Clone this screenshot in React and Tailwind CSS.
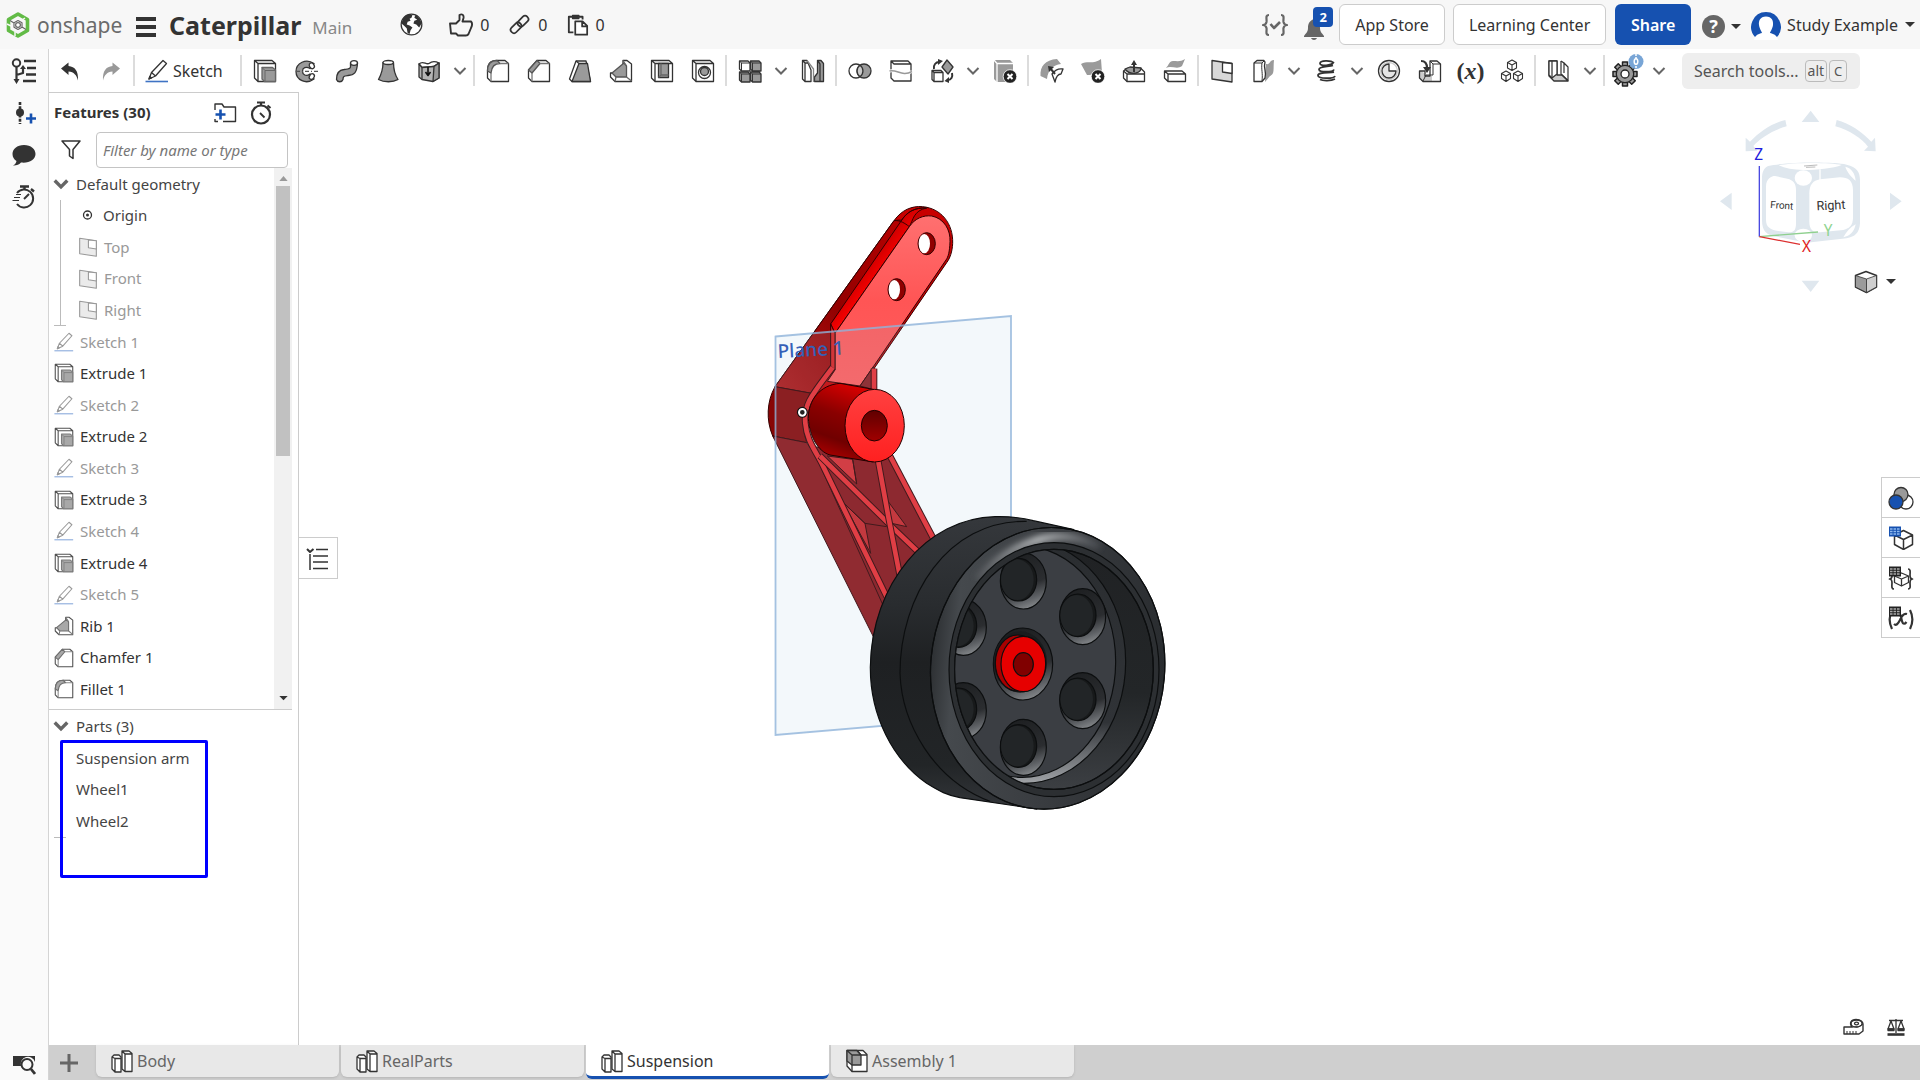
import { useState } from 'react';

const DARK = '#333333';
const GRAY = '#9a9a9a';
const BLUE = '#1651b0';

function Icon({ children, className = 'w-6 h-6', viewBox = '0 0 24 24' }) {
  return (
    <svg
      viewBox={viewBox}
      className={`${className} shrink-0`}
      fill="none"
      stroke={DARK}
      strokeWidth="1.3"
      strokeLinejoin="round"
      aria-hidden="true"
    >
      {children}
    </svg>
  );
}

function Caret({ className = 'w-2.5 h-1.5' }) {
  return (
    <svg viewBox="0 0 10 6" className={`${className} shrink-0`} aria-hidden="true">
      <path d="M0 0H10L5 5Z" fill={DARK} />
    </svg>
  );
}

function Chevron({ className = 'w-3.5 h-2.5', width = 2.4 }) {
  return (
    <svg viewBox="0 0 14 10" className={`${className} shrink-0`} aria-hidden="true">
      <path d="M1.5 2L7 7.5L12.5 2" fill="none" stroke="#666" strokeWidth={width} />
    </svg>
  );
}

/* feature drawings, shared by the toolbar and the feature list */

const drawings = {
  undo: (
    <path d="M3 9.5L10.5 3.5V7C17 7.5 20.5 12 20 21.5C18.5 16 16 13 10.5 12.5V16Z" fill={DARK} stroke="none" />
  ),
  redo: (
    <path d="M21 9.5L13.5 3.5V7C7 7.5 3.5 12 4 21.5C5.5 16 8 13 13.5 12.5V16Z" fill="#999" stroke="none" />
  ),
  sketch: (
    <>
      <path d="M4 20L6.5 13.5L18 1.5L21.5 4.5L10.5 17Z M6.5 13.5L10.5 17" />
      <path d="M4 20L4.8 17.5L6.5 19Z" fill={DARK} />
      <path d="M0.5 22.5H23" stroke="#3f73c4" strokeWidth="1.6" />
    </>
  ),
  extrude: (
    <>
      <path d="M1.5 1.5H19L22.5 4.5V22.5H5L1.5 19Z M1.5 1.5L5 4.5V22.5 M5 4.5H22.5" />
      <path d="M9 8.5H19.5L22.5 11V22.5H11.5L9 20Z" fill={GRAY} stroke="#666" />
      <path d="M9 8.5L12 11.5V22.5M12 11.5H22.5" stroke="#666" strokeWidth="1" />
    </>
  ),
  revolve: (
    <>
      <path d="M20 4.5C12 -1 2 4 2 12.5C2 21 12 26 20 20L16 15C12 18 8.5 15.5 8.5 12.2C8.5 9 12 7 16 9.5Z" fill={GRAY} />
      <ellipse cx="17.8" cy="6.8" rx="2.3" ry="3" transform="rotate(-35 17.8 6.8)" fill="#fff" />
      <ellipse cx="17.8" cy="17.6" rx="2.3" ry="3" transform="rotate(35 17.8 17.6)" fill="#fff" />
      <path d="M2 12.3H24" stroke="#555" strokeDasharray="4 2 1 2" />
    </>
  ),
  sweep: (
    <>
      <path d="M15.5 4V8C15.5 10 13 10 9 10.5C4 11 1.5 14 1.5 20.5C2.5 23.5 7 23.5 8 20.5C8 17 9 17 13 16.5C19 16 22 14 22.5 4Z" fill={GRAY} />
      <ellipse cx="19" cy="4" rx="3.5" ry="2.3" fill="#fff" />
    </>
  ),
  loft: (
    <>
      <path d="M7 3.5C7 12 5 16 2.5 20.5C8 23.5 17 23.5 22 20.5C19 16 17.5 12 17.5 3.5Z" fill={GRAY} />
      <ellipse cx="12.2" cy="3.5" rx="5.2" ry="2" fill="#fff" />
    </>
  ),
  thicken: (
    <>
      <path d="M2 5C6 1 9 6 12 4.5C15 2 18 2 22 4L17 7.5L5 8.5Z" fill="#fff" />
      <path d="M2 5L5 8.5L17 7.5L22 4V19L16 22.5L5 20.5L2 18Z" fill="#b4b4b4" />
      <path d="M17 7.5L22 4V19L16 22.5Z" fill={GRAY} />
      <path d="M5 8.5V20.5" />
      <path d="M11 8V16M8.5 13L11 16.5L13.5 13" stroke="#111" strokeWidth="1.6" />
    </>
  ),
  fillet: (
    <>
      <path d="M1.5 12C1.5 5 5 1.5 11 1.5H19L22.5 4.5V22.5H5L1.5 19Z" />
      <path d="M1.5 12C1.5 5 5 1.5 11 1.5L14 4.5C9 4.5 5.5 8 5 14Z" fill={GRAY} stroke="#555" />
      <path d="M14 4.5H22.5M5 14V22.5" stroke="#777" />
    </>
  ),
  chamfer: (
    <>
      <path d="M1.5 11L10 1.5H19L22.5 4.5V22.5H5L1.5 19Z" />
      <path d="M1.5 11L10 1.5L13 4.5L5 14Z" fill={GRAY} stroke="#555" />
      <path d="M13 4.5H22.5M5 14V22.5" stroke="#777" />
    </>
  ),
  draft: (
    <>
      <path d="M8 2H18L22.5 22.5H4L1.5 20Z" fill="#fff" />
      <path d="M11 4.5H19.5L22.5 22.5H4Z" fill={GRAY} />
      <path d="M8 2L11 4.5" />
    </>
  ),
  rib: (
    <>
      <path d="M14 1.5H18L22.5 5V22.5H6L1.5 18V14H5L14 6Z" />
      <path d="M3 14L15 4L17.5 7V18H7Z" fill={GRAY} stroke="#555" />
      <path d="M17.5 18L22.5 22M17.5 7L14 1.5M7 18L6 22.5" stroke="#666" />
    </>
  ),
  shell: (
    <>
      <path d="M1.5 1.5H19L22.5 4.5V22.5H5L1.5 19Z M1.5 1.5L5 4.5V22.5M5 4.5H22.5" />
      <path d="M8.5 4.5H18.5V18.5H8.5Z" fill={GRAY} />
      <path d="M8.5 18.5L11 16V4.5M11 16H18.5" stroke="#666" />
    </>
  ),
  hole: (
    <>
      <path d="M1.5 1.5H19L22.5 4.5V22.5H5L1.5 19Z M1.5 1.5L5 4.5V22.5M5 4.5H22.5" />
      <circle cx="13.5" cy="13.5" r="6" />
      <circle cx="13.5" cy="12.5" r="4" fill={GRAY} />
    </>
  ),
  pattern: (
    <>
      <path d="M12.5 2H21L23 4V12H14.5L12.5 10Z M1.5 13H10L12 15V23H3.5L1.5 21Z M12.5 13H21L23 15V23H14.5L12.5 21Z" fill={GRAY} />
      <path d="M1.5 2H10L12 4V12H3.5L1.5 10Z" fill="#fff" />
      <path d="M1.5 2L3.5 4H12M3.5 4V12M12.5 2L14.5 4H23M14.5 4V12M1.5 13L3.5 15H12M3.5 15V23M12.5 13L14.5 15H23M14.5 15V23" strokeWidth="1" />
    </>
  ),
  mirror: (
    <>
      <path d="M1.5 1.5H6L10 11V22.5H4L1.5 20Z M4 4V22.5M1.5 1.5L4 4H7" />
      <path d="M22.5 4.5L20 1.5H16.5V14L13.5 18V22.5H22.5Z" fill={GRAY} />
      <path d="M16.5 1.5L19 5V22.5" />
      <path d="M6 1.5L12.5 10V23" stroke="#888" />
    </>
  ),
  boolean: (
    <>
      <circle cx="8" cy="12" r="7" fill="#fff" />
      <circle cx="16" cy="12" r="7" fill={GRAY} />
      <path d="M12 6.3A7 7 0 0 1 12 17.7A7 7 0 0 1 12 6.3Z" fill="#ccc" />
    </>
  ),
  split: (
    <>
      <path d="M2 2H19L22 5V22H5L2 19Z M2 2L5 5H22" />
      <path d="M0.500 12C8 10 13 18 23 12.5" stroke="#fff" strokeWidth="3" />
      <path d="M0.5 12C8 10 13 18 23 12.5" stroke="#999" strokeWidth="1.6" />
    </>
  ),
  transform: (
    <>
      <path d="M2 11.5H11L13 13.5V22.5H4L2 20.5Z M2 11.5L4 13.5H13M4 13.5V22.5" />
      <path d="M17 1L23 8L18 15L12 8Z" fill={GRAY} />
      <path d="M4 10C3 6 6 3 9 3" strokeWidth="2" />
      <path d="M8 0L13 2L8 6Z" fill={DARK} stroke="none" />
      <path d="M22 14C23 18 21 21 18 21" strokeWidth="2" />
      <path d="M19 18V24L14.5 22Z" fill={DARK} stroke="none" />
    </>
  ),
  deletePart: (
    <>
      <path d="M1 1H17L20 4V23H4L1 20Z" fill={GRAY} stroke="none" />
      <path d="M1 1L4 4.5H20M4 4.5V23" stroke="#fff" />
      <circle cx="17" cy="17.5" r="6.800" fill="#222" stroke="#fff" strokeWidth="0.8" />
      <path d="M14.5 15L19.5 20M19.5 15L14.5 20" stroke="#fff" strokeWidth="2" />
    </>
  ),
  replaceFace: (
    <>
      <path d="M0.500 17C0 7 5 1 17 0L21 5C13 6 8 11 7 20Z" fill={GRAY} stroke="none" />
      <path d="M12 15C15 11 18 9 23 10L21 15C18 15 16 18 15 23Z" fill="#fff" />
      <path d="M15 15L10 9" strokeWidth="2" />
      <path d="M8 7L14 8L9 13Z" fill={DARK} stroke="none" />
    </>
  ),
  deleteFace: (
    <>
      <path d="M0 5C7 1 12 6 20 0L21 14C14 11 11 17 6 16Z" fill={GRAY} stroke="none" />
      <circle cx="17" cy="17.5" r="6.8" fill="#222" stroke="#fff" strokeWidth="0.8" />
      <path d="M14.5 15L19.5 20M19.5 15L14.5 20" stroke="#fff" strokeWidth="2" />
    </>
  ),
  moveFace: (
    <>
      <path d="M1.5 12L5 9.5H19L22.5 13V22.5H5L1.5 19Z" fill="#fff" />
      <path d="M3 10C6 14 9 15 14 14C18 13 19 11 19 9L8 8Z" fill={GRAY} />
      <path d="M1.5 12L5 15H22.5M5 15V22.5" />
      <path d="M12 13V3" strokeWidth="2" />
      <path d="M9 6L12 1L15 6Z" fill={DARK} stroke="none" />
    </>
  ),
  offsetFace: (
    <>
      <path d="M3 9C6 6 6 2 10 2C14 2 18 3 22 0L19 7C14 11 8 6 3 9Z" fill={GRAY} stroke="none" />
      <path d="M1.5 12H19L22.5 15V22.5H5L1.5 19Z M1.5 12L5 15H22.5M5 15V22.5" />
    </>
  ),
  plane: (
    <>
      <path d="M2 1.5L22 4.5V23L2 20Z" fill="#d8d8d8" />
      <path d="M12.5 3.500L22 4.500V14.5L12.5 13Z" fill="#fff" />
    </>
  ),
  splitPlane: (
    <>
      <path d="M15 5C20 6 18 1 23 1C22 10 24 15 19 17L14 23Z" fill={GRAY} stroke="none" />
      <path d="M3 4L6 1.5H13L14 3C12 10 16 12 14 19L11 22.5H3Z" fill="#fff" />
      <path d="M3 4H11L13 2M11 4C10 10 12 14 11 22" strokeWidth="1" />
    </>
  ),
  helix: (
    <g strokeWidth="1.8">
      <path d="M20 4C17 1 6 1 6 4.5C6 8 18 6 19 4M19 6.5C15 8 5 7 5 10.5C5 14 19 13 20 10.5M20 13C15 14 4 13 4 16.5C4 20 20 20 21 17M21 20C17 22 9 22 6 20.5" />
    </g>
  ),
  curve: (
    <>
      <circle cx="12" cy="12" r="10.5" />
      <circle cx="12" cy="12" r="8.5" stroke="#ccc" />
      <path d="M12 12H19A7 7 0 1 1 12 5Z" fill="#e4e4e4" />
    </>
  ),
  derive: (
    <>
      <path d="M4 12L7 15V22.5L1.5 19V12Z M14 17V22.5H5L2 19L7 17Z" fill="#ccc" stroke="none" />
      <path d="M12 2H19L22.5 5V22.5H5L1.5 19V12H7V17H12Z" />
      <path d="M12 2L15 5H22M15 5V16H8L5 22" strokeWidth="1" />
      <path d="M3 2C8 2 9 6 9 9" strokeWidth="2.2" />
      <path d="M5 8H13L9 14Z" fill={DARK} stroke="none" />
    </>
  ),
  cubes: (
    <g strokeWidth="1.1">
      <path d="M12 1L16.500 3.5V9L12 11.5L7.5 9V3.5Z M7.5 3.5L12 6L16.5 3.5M12 6V11.5" />
      <path d="M6 12L10.5 14.5V19.5L6 22.5L1.5 19.5V14.5Z M1.5 14.5L6 17L10.5 14.5M6 17V22.5" />
      <path d="M18 12L22.5 14.5V19.5L18 22.5L13.5 19.5V14.5Z M13.5 14.5L18 17L22.5 14.5M18 17V22.5" />
    </g>
  ),
  frame: (
    <>
      <path d="M2 2V17L7 22H21L15 16H10V2Z" fill="#ccc" />
      <path d="M2 2H10V15L5 19L2 16Z" fill="#fff" />
      <path d="M5 2V18M14 2V15L21 21.500V8L17 4V14" strokeWidth="1.2" />
      <path d="M14 2L17 4" />
    </>
  ),
};

function ToolIcon({ name }) {
  return <Icon>{drawings[name]}</Icon>;
}

function Tool({ name, label, children }) {
  return (
    <button type="button" aria-label={label || name} className="w-[41px] h-full flex items-center justify-center shrink-0">
      {children || <ToolIcon name={name} />}
    </button>
  );
}

function ToolChevron() {
  return (
    <button type="button" aria-label="More tools" className="w-[22px] h-full flex items-center justify-center shrink-0">
      <Chevron width={2} />
    </button>
  );
}

function Separator() {
  return <span className="w-0.5 h-[31px] mx-0.5 bg-[#dcdcdc] shrink-0" />;
}

function Header() {
  return (
    <header className="h-[49px] bg-[#f7f7f7] flex items-center shrink-0 pr-[5px] text-[16px]">
      <a href="#home" className="flex items-center w-[136px] pl-1.5 text-[#6b6b6b] text-[21px] leading-6">
        <Icon className="w-6 h-[26px] mr-[7px]" viewBox="0 0 24 26">
          <path d="M12 2L21.5 7.5V18.5L12 24L2.5 18.5V7.5Z" stroke="#62bb46" strokeWidth="3.6" />
          <path d="M12 6.5L17.5 9.7V16.3L12 19.5L6.5 16.3V9.7Z" fill="#fff" stroke="#f7f7f7" strokeWidth="1.5" />
          <path d="M12 8.5L16 10.8V15.2L12 17.5L8 15.2V10.8Z M8 11L4 8.5M16 15L20 17.5" stroke="#666" strokeWidth="1.2" />
          <circle cx="12" cy="13" r="2.4" stroke="#666" strokeWidth="1.2" />
          <path d="M1 12L5 14M19 6L16 8M9 24L9 20" stroke="#f7f7f7" strokeWidth="1.5" />
        </Icon>
        <span>onshape</span>
      </a>
      <button type="button" aria-label="Document menu" className="flex flex-col gap-1 w-5 mt-1">
        <span className="w-5 h-1 bg-[#333]" />
        <span className="w-5 h-1 bg-[#333]" />
        <span className="w-5 h-1 bg-[#333]" />
      </button>
      <h1 className="ml-[13px] text-[25px] leading-8 font-bold text-[#333]">Caterpillar</h1>
      <span className="ml-[11px] mt-1.5 text-[17px] text-[#888]">Main</span>
      <button type="button" aria-label="Public document" className="ml-12">
        <Icon className="w-[23px] h-[23px]">
          <circle cx="12" cy="12" r="10.8" fill="#fff" />
          <path d="M3 6C6 1 10 1 13 2L12 5L10 6L11 8L8 9L7 12L10 13L13 15L11 18L10 22L8 21L7 16L4 13L1.5 11Z M16 2C19 3 22 7 22.5 11L20 15L17 12L14 11L15 8L18 7L15 5Z" fill={DARK} stroke="none" />
        </Icon>
      </button>
      <button type="button" aria-label="Likes" className="ml-[25px] flex items-center gap-1.5">
        <Icon className="w-[26px] h-6" viewBox="0 0 26 24">
          <path d="M2 10.5H8L11.5 7V2C14 0.5 16 2 15.5 5L14.5 8.5H23C24.5 10 24 13 23 15L20.5 21C20 22 19 22.5 18 22.5H10L8 20.5H3Z" strokeWidth="1.9" />
        </Icon>
        0
      </button>
      <button type="button" aria-label="Links" className="ml-5 flex items-center gap-2">
        <Icon className="w-[21px] h-[21px]">
          <g strokeWidth="2">
            <rect x="1" y="12" width="14" height="7.5" rx="3.5" transform="rotate(-45 8 15.7)" />
            <rect x="9" y="4.5" width="14" height="7.5" rx="3.5" transform="rotate(-45 16 8.2)" />
          </g>
        </Icon>
        0
      </button>
      <button type="button" aria-label="Copies" className="ml-5 flex items-center gap-1.5">
        <Icon className="w-[22px] h-6">
          <path d="M7 20H2V3H6M13 3H17V6" strokeWidth="2" />
          <path d="M6 1.5H13V5H6Z" fill={DARK} />
          <path d="M9 8H17L22 13V22.5H9Z M16.5 8V13.5H22" fill="#fff" strokeWidth="1.9" />
        </Icon>
        0
      </button>

      <div className="ml-auto flex items-center">
        <button type="button" aria-label="Tasks">
          <Icon className="w-[26px] h-6" viewBox="0 0 26 24">
            <g stroke="#666" strokeWidth="2.2">
              <path d="M7 2C3 2 5 6 4.5 9C4 11 3 12 1 12C3 12 4 13 4.5 15C5 18 3 22 7 22" />
              <path d="M19 2C23 2 21 6 21.5 9C22 11 23 12 25 12C23 12 22 13 21.5 15C21 18 23 22 19 22" />
              <path d="M8.5 11L12 15L18 9" strokeWidth="2.6" />
            </g>
          </Icon>
        </button>
        <button type="button" aria-label="Notifications" className="relative ml-[15px] mr-[5px] w-[31px] h-[42px]">
          <svg viewBox="0 0 22 22" className="absolute left-0 top-3.5 w-[22px] h-[22px]" aria-hidden="true">
            <path d="M11 1C6 3 5 6 5 10C5 14 3 15 1 18V19H21V18C19 15 17 14 17 10C17 6 16 3 11 1Z" fill="#666" />
            <path d="M8 20H14C13 22.5 9 22.5 8 20Z" fill="#666" />
          </svg>
          <span className="absolute left-2.5 top-[3px] w-5 h-5 rounded-sm bg-[#1651b0] text-white text-[13px] leading-5 font-bold">2</span>
        </button>
        <button type="button" className="w-[106px] h-[41px] bg-white border border-[#ccc] rounded-md">App Store</button>
        <button type="button" className="ml-2 w-[153px] h-[41px] bg-white border border-[#ccc] rounded-md">Learning Center</button>
        <button type="button" className="ml-[9px] w-[76px] h-[41px] bg-[#1651b0] text-white font-semibold rounded-md">Share</button>
        <button type="button" aria-label="Help" className="ml-[11px] mt-1 flex items-center gap-1.5">
          <span className="w-[23px] h-[23px] rounded-full bg-[#666] text-white text-[18px] leading-[23px] font-bold">?</span>
          <Caret />
        </button>
        <button type="button" className="ml-2.5 flex items-center">
          <svg viewBox="0 0 30 30" className="w-[30px] h-[30px] mt-1 mr-1.5" aria-hidden="true">
            <path d="M15 0A15 15 0 0 1 26 25L4 25A15 15 0 0 1 15 0Z" fill={BLUE} />
            <path d="M15 4.5C21 4.5 22.5 9 22 13C21.5 17 19 20 19 21C22 22 26 22.5 27 28L3 28C4 22.5 8 22 11 21C11 20 8.5 17 8 13C7.5 9 9 4.5 15 4.5Z" fill="#fff" />
          </svg>
          Study Example
          <Caret className="w-2.5 h-1.5 ml-[7px]" />
        </button>
      </div>
    </header>
  );
}

function Toolbar() {
  return (
    <div className="h-[43px] flex items-center shrink-0 overflow-hidden">
      <Tool name="undo" />
      <Tool name="redo" />
      <Separator />
      <button type="button" className="w-[101px] pl-2 flex items-center gap-1 text-[16px] shrink-0">
        <ToolIcon name="sketch" />
        Sketch
      </button>
      <Separator />
      <Tool name="extrude" />
      <Tool name="revolve" />
      <Tool name="sweep" />
      <Tool name="loft" />
      <Tool name="thicken" />
      <ToolChevron />
      <Separator />
      <Tool name="fillet" />
      <Tool name="chamfer" />
      <Tool name="draft" />
      <Tool name="rib" />
      <Tool name="shell" />
      <Tool name="hole" />
      <Separator />
      <Tool name="pattern" />
      <ToolChevron />
      <Tool name="mirror" />
      <Separator />
      <Tool name="boolean" />
      <Tool name="split" />
      <Tool name="transform" />
      <ToolChevron />
      <Tool name="deletePart" />
      <Separator />
      <Tool name="replaceFace" />
      <Tool name="deleteFace" />
      <Tool name="moveFace" />
      <Tool name="offsetFace" />
      <Separator />
      <Tool name="plane" />
      <Tool name="splitPlane" />
      <ToolChevron />
      <Tool name="helix" />
      <ToolChevron />
      <Tool name="curve" />
      <Tool name="derive" />
      <Tool name="variable" label="Variable">
        <span className="font-['Liberation_Serif',serif] font-bold text-[24px] leading-6">
          (<i>x</i>)
        </span>
      </Tool>
      <Tool name="cubes" />
      <Separator />
      <Tool name="frame" />
      <ToolChevron />
      <Separator />
      <Tool name="custom" label="Custom features">
        <Icon className="w-8 h-9" viewBox="0 0 32 36">
          <g transform="translate(13 21)">
            {[0, 45, 90, 135].map((a) => (
              <rect key={a} x="-2.5" y="-12" width="5" height="24" fill={GRAY} stroke="#222" strokeWidth="1.5" transform={`rotate(${a})`} />
            ))}
            <circle r="8.7" fill={GRAY} stroke="#222" strokeWidth="1.3" />
            <circle r="4" fill="#fff" stroke="#222" />
          </g>
          <circle cx="24" cy="8.5" r="7.5" fill="#78a5d6" stroke="none" />
          <path d="M24 1V16" stroke="#fff" strokeWidth="1.5" strokeDasharray="2 1" />
          <ellipse cx="24" cy="8.5" rx="1.800" ry="2.8" stroke="#fff" strokeWidth="1.5" fill="#78a5d6" />
        </Icon>
      </Tool>
      <ToolChevron />
      <button type="button" className="ml-3 w-[178px] h-9 pl-3 bg-[#eeeeee] rounded-md flex items-center text-[16px] text-[#555] shrink-0">
        Search tools...
        <kbd className="ml-1.5 px-0.5 h-[22px] border border-[#bbb] rounded-sm text-[14px] leading-5 font-[inherit]">alt</kbd>
        <kbd className="ml-0.5 w-[18px] h-[22px] border border-[#bbb] rounded-sm text-[13px] leading-5 text-center font-[inherit]">C</kbd>
      </button>
    </div>
  );
}

function LeftRail() {
  return (
    <nav className="w-[49px] bg-[#fafafa] border-r border-[#d4d4d4] flex flex-col items-center shrink-0">
      <button type="button" aria-label="Feature list" className="mt-2">
        <Icon className="w-7 h-7" viewBox="0 0 28 28">
          <circle cx="6.5" cy="6" r="3.7" strokeWidth="2" />
          <path d="M6.5 10V24M6.5 18L13 16V11" strokeWidth="2.2" />
          <path d="M3.5 22H9.5L6.5 27Z M10 12L13 8L16 12Z" fill={DARK} stroke="none" />
          <path d="M14 4H26M17 11H26M16 17.5H26M13 24H26" strokeWidth="2.4" />
        </Icon>
      </button>
      <button type="button" aria-label="Insert version" className="mt-4 ml-0.5">
        <Icon className="w-6 h-6">
          <path d="M7 1V23" strokeWidth="2.6" strokeDasharray="3 1.2" />
          <circle cx="7" cy="11.5" r="4" fill={DARK} stroke="none" />
          <path d="M13 17.5H23M18 12.5V22.5" stroke={BLUE} strokeWidth="2.6" />
        </Icon>
      </button>
      <button type="button" aria-label="Comments" className="mt-[18px]">
        <Icon className="w-6 h-6">
          <path d="M12 2C5 2 0.5 6 0.5 11C0.5 14 2 16.5 4.5 18C4 20 3 21.5 1 22.5C4 22.8 7.5 21.5 9 19.5C17 20.5 23.5 16.5 23.5 11C23.5 6 19 2 12 2Z" fill={DARK} stroke="none" />
        </Icon>
      </button>
      <button type="button" aria-label="Performance" className="mt-[18px]">
        <Icon className="w-6 h-6">
          <path d="M5 8A9 9 0 1 1 5 19" strokeWidth="2" />
          <path d="M8 1.5H17M12.5 2V4.5M19 4L22 6.5" strokeWidth="2.4" />
          <path d="M12 14L17 9" strokeWidth="2" />
          <path d="M4 9.5H9M2 12.5H8M0.5 15.5H7" strokeWidth="1.2" />
        </Icon>
      </button>
      <button type="button" aria-label="Search tabs" className="mt-auto mb-1">
        <Icon className="w-6 h-6">
          <path d="M1 4H23V10A7 7 0 1 0 9 14H1Z" fill={DARK} stroke="none" />
          <circle cx="15" cy="12.5" r="5.5" fill="#fafafa" strokeWidth="2" />
          <path d="M19 17L23 22" strokeWidth="2.8" />
        </Icon>
      </button>
    </nav>
  );
}

const features = [
  ['sketch', 'Sketch 1'],
  ['extrude', 'Extrude 1'],
  ['sketch', 'Sketch 2'],
  ['extrude', 'Extrude 2'],
  ['sketch', 'Sketch 3'],
  ['extrude', 'Extrude 3'],
  ['sketch', 'Sketch 4'],
  ['extrude', 'Extrude 4'],
  ['sketch', 'Sketch 5'],
  ['rib', 'Rib 1'],
  ['chamfer', 'Chamfer 1'],
  ['fillet', 'Fillet 1'],
];

function FeaturePanel() {
  const [filter, setFilter] = useState('');

  return (
    <aside className="w-[250px] border-t border-r border-[#ccc] bg-white flex flex-col shrink-0 text-[15px]">
      <div className="h-[39px] pl-[5px] pr-[25px] flex items-center shrink-0">
        <h2 className="font-bold text-[15px]">Features (30)</h2>
        <button type="button" aria-label="Add folder" className="ml-auto">
          <Icon className="w-6 h-6">
            <path d="M2 9V3H9L11 6H22.5V20.5H10M2 18V20.5H5" strokeWidth="1.4" />
            <path d="M2.500 13.5H12.5M7.5 8.500V18.5" stroke={BLUE} strokeWidth="2.6" />
          </Icon>
        </button>
        <button type="button" aria-label="Regeneration times" className="ml-3">
          <Icon className="w-6 h-6">
            <circle cx="12" cy="13.5" r="9" strokeWidth="2.2" />
            <path d="M8 1.5H16M12 2V5M18.5 4.5L21.5 7" strokeWidth="2.2" />
            <path d="M11 12L15.5 16.5" strokeWidth="1.8" />
          </Icon>
        </button>
      </div>
      <div className="h-9 pl-3 pr-2.5 flex items-center shrink-0">
        <Icon className="w-5 h-5" viewBox="0 0 20 20">
          <path d="M1 1H19L12 9.5V18.5L8.5 16V9.5Z" strokeWidth="1.5" />
        </Icon>
        <input
          type="text"
          aria-label="Filter features"
          placeholder="Filter by name or type"
          value={filter}
          onChange={(e) => setFilter(e.target.value)}
          className="ml-[15px] w-full min-w-0 h-9 px-1.5 border border-[#c4c4c4] rounded-sm bg-white text-[15px] placeholder:italic placeholder:text-[#777]"
        />
      </div>

      <div className="flex h-[542px] mr-1.5 border-b border-[#ccc] shrink-0">
        <ul className="relative flex-1 flex flex-col pb-1 text-[#444]">
          <li className="flex-1 flex items-center gap-[7px] pl-1">
            <Chevron className="w-4 h-3" width={3} />
            Default geometry
          </li>
          <li className="flex-1 flex items-center gap-[7px] pl-[30px]">
            <Icon className="w-[17px] h-4" viewBox="0 0 17 16">
              <circle cx="8.5" cy="8" r="4" />
              <circle cx="8.5" cy="8" r="1.5" fill={DARK} stroke="none" />
            </Icon>
            Origin
          </li>
          {['Top', 'Front', 'Right'].map((name) => (
            <li key={name} className="flex-1 flex items-center gap-1.5 pl-[29px] text-[#999]">
              <Icon className="w-5 h-5 opacity-50">{drawings.plane}</Icon>
              {name}
            </li>
          ))}
          {features.map(([icon, name]) => (
            <li
              key={name}
              className={`flex-1 flex items-center gap-1.5 pl-[5px] ${icon === 'sketch' ? 'text-[#999]' : 'text-[#333]'}`}
            >
              <Icon className={icon === 'sketch' ? 'w-5 h-5 opacity-50' : 'w-5 h-5 opacity-85'}>{drawings[icon]}</Icon>
              {name}
            </li>
          ))}
          <li aria-hidden="true" className="absolute left-[11px] top-8 w-px h-[125px] bg-[#bbb]" />
          <li aria-hidden="true" className="absolute left-[5px] top-[157px] w-3 h-px bg-[#bbb]" />
        </ul>
        <div className="w-[18px] bg-[#f1f1f1] flex flex-col items-center" aria-hidden="true">
          <svg viewBox="0 0 10 6" className="w-[9px] h-[5px] mt-2">
            <path d="M5 0L10 6H0Z" fill="#999" />
          </svg>
          <span className="mt-[5px] w-3.5 h-[270px] bg-[#c1c1c1]" />
          <Caret className="w-[9px] h-[5px] mt-auto mb-2" />
        </div>
      </div>

      <div className="relative text-[#444]">
        <div className="h-8 flex items-center gap-[7px] pl-1">
          <Chevron className="w-4 h-3" width={3} />
          Parts (3)
        </div>
        <ul className="pl-[27px]">
          <li className="h-8 flex items-center">Suspension arm</li>
          <li className="h-[31px] flex items-center">Wheel1</li>
          <li className="h-8 flex items-center">Wheel2</li>
        </ul>
        <span className="block w-3 h-px ml-[5px] bg-[#bbb]" />
        <span className="absolute left-[11px] top-[30px] w-[148px] h-[138px] border-[3px] border-[#0000ff] rounded-xs" />
      </div>
    </aside>
  );
}

function Arm() {
  return (
    <g transform="translate(740 180) scale(0.33333)" stroke="#300" strokeWidth="3" strokeLinejoin="round">
      {/* upper lever */}
      <path d="M105 620L462 122C485 90 515 77 548 80C603 85 640 130 638 190C637 215 630 235 620 248L402 566L408 632L300 660L210 700Z" fill="#c80000" />
      <path d="M105 620L462 122C485 118 490 122 496 126L272 432V560L215 640Z" fill="url(#armSide)" />
      <path d="M272 432L482 125C500 95 525 82 560 84C520 92 520 120 508 140L285 460Z" fill="url(#armEdge)" />
      <path d="M462 122C480 120 495 130 508 140M482 125C500 95 525 82 560 84" fill="none" />
      <path d="M285 460L508 140C525 115 550 105 575 108C612 115 632 150 630 185C629 215 625 230 618 240L400 560L360 618L262 604L285 570Z" fill="url(#armFace)" />
      <path d="M400 560L360 618L406 630V570Z" fill="#8c1c20" />
      <path d="M272 432V560L285 570V460Z" fill="#d92020" />
      <ellipse cx="560" cy="191" rx="26" ry="33" fill="#900000" />
      <ellipse cx="553" cy="191" rx="17" ry="29" fill="#fff" stroke="none" />
      <ellipse cx="470" cy="329" rx="26" ry="33" fill="#900000" />
      <ellipse cx="463" cy="329" rx="17" ry="29" fill="#fff" stroke="none" />

      {/* elbow and lower lever */}
      <path d="M105 620L215 640C190 690 185 740 200 788L98 768C78 720 80 665 105 620Z" fill="#880606" />
      <path d="M98 768L200 788L250 860L440 1250L400 1370Z" fill="#8e1418" />
      <path d="M215 800L450 820L640 1200L440 1300Z" fill="#8a1216" />
      <path d="M262 828L338 838L350 912Z" fill="#d92a2e" />
      <path d="M310 968L375 1030L392 1120Z M445 965L500 1040L455 1030Z" fill="#c92428" />
      <path d="M375 1030L440 1040M338 838L350 912M310 968L375 1030" fill="none" />
      {[
        'M278 562C220 640 190 670 196 730C200 780 225 810 245 850L440 1250',
        'M240 828L455 1040L560 1140',
        'M414 840L445 1010L480 1190',
        'M450 828L585 1085',
        'M402 566V632',
      ].map((d) => (
        <g key={d} fill="none">
          <path d={d} strokeWidth="20" />
          <path d={d} stroke="#ea2a2e" strokeWidth="14" />
        </g>
      ))}
    </g>
  );
}

function Boss() {
  return (
    <g transform="translate(740 180) scale(0.33333)" stroke="#200" strokeWidth="3">
      <path d="M405 629L300 610C240 615 205 660 205 715C208 770 235 815 270 825L400 846Z" fill="url(#boss)" />
      <ellipse cx="404" cy="737" rx="89" ry="109" fill="url(#bossFace)" />
      <ellipse cx="403" cy="737" rx="39" ry="46" fill="url(#bore)" />
      <circle cx="187" cy="697" r="13" fill="#333" stroke="#111" strokeWidth="7" />
      <circle cx="187" cy="697" r="10" fill="#222" stroke="#fff" strokeWidth="6" />
    </g>
  );
}

// centres of the six lightening holes in the wheel disc
const wheelHoles = [
  [790, 423],
  [968, 530],
  [968, 782],
  [790, 922],
  [610, 562],
  [610, 812],
];

function Wheel() {
  return (
    <g transform="translate(760 440) scale(0.33333)" stroke="#0c0e0f" strokeWidth="3.5">
      <path d="M705 230C500 235 335 430 331 680C330 830 400 960 500 1030C540 1055 560 1065 600 1073L830 1107L940 268L820 242C780 232 740 229 705 230Z" fill="url(#tyre)" />
      <path d="M800 244C560 240 420 470 420 700C425 850 520 1020 690 1084" fill="none" />
      <ellipse cx="863" cy="685" rx="351" ry="423" transform="rotate(5 863 685)" fill="url(#rim)" />
      <g clipPath="url(#rimClip)">
        <path d="M660 410C720 345 800 300 880 290C930 286 970 296 1010 316" fill="none" stroke="url(#glint)" strokeWidth="24" strokeLinecap="round" filter="url(#soft)" />
      </g>
      <ellipse cx="863" cy="685" rx="351" ry="423" transform="rotate(5 863 685)" fill="none" />
      <ellipse cx="882" cy="689" rx="315" ry="381" fill="#2c2f32" />
      <ellipse cx="882" cy="688" rx="298" ry="360" fill="url(#cavity)" />
      <g clipPath="url(#cavityClip)">
        <ellipse cx="792" cy="665" rx="305" ry="365" fill="url(#lip)" />
        <ellipse cx="786" cy="665" rx="281" ry="347" fill="#3b3e43" />
        {wheelHoles.map(([x, y]) => (
          <g key={`${x}-${y}`}>
            <ellipse cx={x} cy={y} rx="69" ry="84" fill="url(#hole)" />
            <ellipse cx={x - 14} cy={y - 4} rx="54" ry="64" fill="#17191a" />
            <ellipse cx={x - 18} cy={y - 4} rx="49" ry="61" fill="#222527" stroke="none" />
          </g>
        ))}
      </g>
      <ellipse cx="882" cy="688" rx="298" ry="360" fill="none" />
      <ellipse cx="789" cy="672" rx="89" ry="108" fill="url(#hole)" />
      <ellipse cx="781" cy="666" rx="80" ry="92" fill="#1a1c1e" stroke="none" />
      <ellipse cx="773" cy="669" rx="67" ry="84" fill="#a80000" />
      <ellipse cx="790" cy="672" rx="67" ry="83" fill="#e60000" />
      <ellipse cx="790" cy="673" rx="30" ry="35" fill="#800000" />
    </g>
  );
}

function Model() {
  return (
    <svg viewBox="760 195 410 620" className="absolute left-[461px] top-[103px] w-[410px] h-[620px]" role="img" aria-label="Suspension arm with wheel">
      <defs>
        <linearGradient id="armSide" x1="1" y1="0" x2="0" y2="1">
          <stop offset="0" stopColor="#b80000" />
          <stop offset="0.5" stopColor="#920000" />
          <stop offset="1" stopColor="#b01818" />
        </linearGradient>
        <linearGradient id="armEdge" x1="0" y1="0" x2="1" y2="1">
          <stop offset="0.35" stopColor="#b00000" />
          <stop offset="0.5" stopColor="#f00000" />
          <stop offset="0.65" stopColor="#ff3535" />
        </linearGradient>
        <linearGradient id="armFace" x1="0" y1="0" x2="0" y2="1">
          <stop offset="0" stopColor="#ff7070" />
          <stop offset="0.5" stopColor="#ff5555" />
          <stop offset="1" stopColor="#ff5c5c" />
        </linearGradient>
        <linearGradient id="boss" x1="0.6" y1="0" x2="0.3" y2="1">
          <stop offset="0" stopColor="#d80000" />
          <stop offset="0.4" stopColor="#8a0000" />
          <stop offset="0.7" stopColor="#700000" />
          <stop offset="1" stopColor="#b80000" />
        </linearGradient>
        <linearGradient id="bossFace" x1="0" y1="0" x2="0" y2="1">
          <stop offset="0" stopColor="#ff4040" />
          <stop offset="1" stopColor="#ff2020" />
        </linearGradient>
        <linearGradient id="bore" x1="0" y1="0" x2="0" y2="1">
          <stop offset="0" stopColor="#600000" />
          <stop offset="1" stopColor="#a00000" />
        </linearGradient>
        <linearGradient id="tyre" x1="0.3" y1="0" x2="0.3" y2="1">
          <stop offset="0" stopColor="#35383c" />
          <stop offset="0.3" stopColor="#292c2f" />
          <stop offset="0.5" stopColor="#1e2022" />
          <stop offset="0.85" stopColor="#222527" />
          <stop offset="1" stopColor="#33363a" />
        </linearGradient>
        <linearGradient id="rim" x1="0" y1="0" x2="1" y2="0">
          <stop offset="0" stopColor="#2d3033" />
          <stop offset="0.1" stopColor="#45494d" />
          <stop offset="0.5" stopColor="#3a3d41" />
          <stop offset="1" stopColor="#292c2f" />
        </linearGradient>
        <linearGradient id="glint" x1="0" y1="0.5" x2="1" y2="0.5">
          <stop offset="0" stopColor="#55585c" />
          <stop offset="0.5" stopColor="#b5b8ba" />
          <stop offset="1" stopColor="#484b50" />
        </linearGradient>
        <linearGradient id="cavity" x1="0" y1="0" x2="0" y2="1">
          <stop offset="0" stopColor="#202224" />
          <stop offset="0.6" stopColor="#232628" />
          <stop offset="1" stopColor="#3c3f43" />
        </linearGradient>
        <linearGradient id="lip" x1="0" y1="0" x2="0" y2="1">
          <stop offset="0" stopColor="#2a2d30" />
          <stop offset="0.75" stopColor="#303337" />
          <stop offset="1" stopColor="#a0a3a7" />
        </linearGradient>
        <linearGradient id="hole" x1="0.3" y1="0" x2="0.6" y2="1">
          <stop offset="0" stopColor="#1d1f21" />
          <stop offset="0.6" stopColor="#2b2d30" />
          <stop offset="0.85" stopColor="#5f6266" />
          <stop offset="1" stopColor="#85888b" />
        </linearGradient>
        <clipPath id="cavityClip">
          <ellipse cx="882" cy="688" rx="298" ry="360" />
        </clipPath>
        <clipPath id="rimClip">
          <ellipse cx="863" cy="685" rx="351" ry="423" transform="rotate(5 863 685)" />
        </clipPath>
        <filter id="soft">
          <feGaussianBlur stdDeviation="9" />
        </filter>
      </defs>
      <Arm />
      <path d="M775.5 336.5L1011 316V715L775.5 735Z" fill="#a6c6de" fillOpacity="0.13" stroke="#8fb3da" strokeOpacity="0.8" strokeWidth="1.8" />
      <text x="778" y="358" transform="rotate(-3 778 358)" fontSize="19" fontWeight="500" fill="#3560b8">Plane 1</text>
      <Boss />
      <Wheel />
    </svg>
  );
}

function ViewCube() {
  return (
    <svg viewBox="0 0 660 660" className="absolute right-0 top-[-2px] w-[220px] h-[220px]" role="img" aria-label="View cube">
      <g fill="#dfe7ee">
        <path d="M332 62L358 96H305Z M332 606L358 572H305Z M60 334L95 308V360Z M605 334L570 308V360Z" />
        <path d="M256 90L260 109C220 120 180 145 160 168L172 182L137 184V143L150 155C180 125 215 100 256 90Z" />
        <path d="M410 90L406 109C446 120 486 145 504 170L492 182L527 184L525 143L514 155C484 125 450 100 410 90Z" />
        <path d="M205 228C260 215 400 215 440 224C470 232 480 245 480 270V400C478 430 465 440 440 445L320 458L230 440C200 435 186 425 186 390V260C188 240 195 232 205 228Z" />
      </g>
      <g fill="#fff">
        <path d="M236 226C270 217 390 216 425 225C400 235 350 240 310 240C280 240 255 235 236 226Z" />
        <ellipse cx="310" cy="264" rx="26" ry="23" />
        <ellipse cx="310" cy="436" rx="26" ry="20" />
        <path d="M225 258C215 258 198 265 198 290V390C198 410 210 420 235 423L265 427C282 428 288 420 288 400V300C288 280 280 270 262 266Z" />
        <path d="M360 268L420 262C445 262 458 272 459 300V385C458 405 450 415 430 420L360 427C340 428 328 420 328 395V310C328 285 338 272 360 268Z" />
        <path d="M436 230C455 235 465 250 467 272C455 262 440 245 436 230Z M467 403C463 425 450 438 430 442C440 425 450 412 467 403Z" />
      </g>
      <path d="M360 238V270" stroke="#fff" strokeWidth="4" />
      <path d="M312 228L352 225M318 232L346 231" stroke="#999" strokeWidth="2" />
      <path d="M178 228V440" stroke="#4a4ae0" strokeWidth="4" />
      <path d="M178 440L354 426" stroke="#8fd08f" strokeWidth="4" />
      <path d="M178 440L300 463" stroke="#dc3030" strokeWidth="4" />
      <text x="163" y="209" fontSize="46" fill="#2020dd">Z</text>
      <text x="306" y="485" fontSize="46" fill="#e02020">X</text>
      <text x="371" y="438" fontSize="46" fill="#90d490">Y</text>
      <g className="font-['Roboto',sans-serif]" fill="#333">
        <text x="210" y="354" fontSize="30" transform="rotate(4 210 354)">Front</text>
        <text x="350" y="361" fontSize="38" transform="rotate(-3 350 361)">Right</text>
      </g>
    </svg>
  );
}

function MiniTable({ color = '#222', cell = '#aaa' }) {
  return (
    <>
      <rect x="1" y="0.500" width="12" height="10" fill={color} stroke="none" />
      <path d="M2 3H12M2 5.5H12M2 8H12" stroke={cell} strokeWidth="1.4" strokeDasharray="2.6 0.9" />
    </>
  );
}

function RightTools() {
  const tool = 'w-[39px] h-[41px] bg-white border border-r-0 border-[#ccc] -mt-px flex items-center justify-center';
  return (
    <div className="absolute right-0 top-[386px] flex flex-col">
      <button type="button" aria-label="Appearance" className={tool}>
        <Icon className="w-[26px] h-6" viewBox="0 0 26 24">
          <circle cx="18" cy="16" r="7" fill="#fff" />
          <circle cx="13" cy="8.500" r="7" fill={GRAY} />
          <circle cx="8" cy="16" r="7" fill={BLUE} />
        </Icon>
      </button>
      <button type="button" aria-label="Configurations" className={tool}>
        <Icon className="w-[26px] h-6" viewBox="0 0 26 24">
          <path d="M15.5 4.5L24.5 9V18.5L15.5 23.5L6.5 18.5V9Z M6.5 9L15.5 13.5L24.5 9M15.5 13.5V23.5" strokeWidth="1.5" />
          <MiniTable color={BLUE} cell="#8db8ee" />
        </Icon>
      </button>
      <button type="button" aria-label="Custom tables" className={tool}>
        <Icon className="w-[26px] h-6" viewBox="0 0 26 24">
          <path d="M13.5 7L20.5 10V16.5L13.5 20L6.5 16.5V10Z M6.5 10L13.5 13L20.5 10M13.5 13V20" strokeWidth="1.3" />
          <path d="M6 23C3 23 4 19 4 17C4 15 3 13 1.5 13C3 13 4 12 4 10M20 3C23 3 22 7 22 9C22 11 23 13 24.5 13C23 13 22 15 22 17C22 20 23 23 20 23" strokeWidth="1.7" />
          <MiniTable />
        </Icon>
      </button>
      <button type="button" aria-label="Variable table" className={tool}>
        <Icon className="w-[26px] h-6" viewBox="0 0 26 24">
          <path d="M4 4C1 10 1 17 4 23M22 4C25 10 25 17 22 23" strokeWidth="2.2" />
          <path d="M6 18C8 20 10 18 12 14C14 9 16 7 19 8M10 9C13 6 13 12 14 15C15 19 17 18 18.5 16" strokeWidth="2.2" />
          <MiniTable />
        </Icon>
      </button>
    </div>
  );
}

function Viewport() {
  return (
    <main className="relative flex-1 bg-white overflow-hidden">
      <Model />
      <ViewCube />
      <button type="button" aria-label="View options" className="absolute right-6 top-[178px] flex items-center gap-2">
        <Icon className="w-6 h-6">
          <path d="M12 1.5L22.5 5.5V17L12.5 22.5L1.5 17V5.5Z" fill="#fff" strokeWidth="1.5" />
          <path d="M1.5 5.5L12.5 9V22.5L1.5 17Z" fill="#9b9b9b" strokeWidth="0.8" />
          <path d="M12.5 9L22.5 5.5V17L12.5 22.5Z" fill="#cfcfcf" strokeWidth="0.8" />
        </Icon>
        <Caret />
      </button>
      <button type="button" aria-label="Toggle feature list" className="absolute left-0 top-[445px] w-[39px] h-[42px] bg-white border border-l-0 border-[#ccc] pt-0.5 pr-0.5 flex items-center justify-center">
        <Icon className="w-6 h-6">
          <path d="M2 2L5 5L8.5 2" strokeWidth="2" />
          <path d="M5 7V23" strokeWidth="1.5" />
          <path d="M11 2.5H23M8 9H23M8 15H23M8 21.5H23" strokeWidth="1.5" />
        </Icon>
      </button>
      <RightTools />
      <div className="absolute right-[15px] bottom-[9px] flex items-center gap-[23px]">
        <button type="button" aria-label="Measure">
          <Icon className="w-[21px] h-[18px]" viewBox="0 0 21 18">
            <path d="M1 9H9C6 5 8 1.500 13 1.5C18 1.5 20 4 20 6V13L16 16H1Z" strokeWidth="1.4" />
            <ellipse cx="13.5" cy="5.5" rx="5.5" ry="3.5" />
            <ellipse cx="13.5" cy="5.5" rx="2" ry="1.3" />
            <path d="M4 13V16M7 13V16M10 13V16M13 13V16M9 9H15L20 6" strokeWidth="1" />
          </Icon>
        </button>
        <button type="button" aria-label="Mass properties">
          <Icon className="w-[18px] h-[18px]" viewBox="0 0 18 18">
            <path d="M9 1V15M2 2.5H16M4 3L1 11H7L4 3M14 3L11 11H17L14 3" />
            <path d="M1 11H7V12.5H1ZM11 11H17V12.5H11Z" fill={DARK} />
            <path d="M0.5 16.5H17.5" strokeWidth="2.6" />
          </Icon>
        </button>
      </div>
    </main>
  );
}

function PartStudioIcon() {
  return (
    <Icon className="w-[22px] h-6" viewBox="0 0 22 24">
      <path d="M1 8L3 6H8L10 8V23H4L1 20Z M1 8L4 9.5H10M4 9.5V23" fill="#fff" />
      <path d="M11 2H18L21 4.5V22.5H14L11 20Z M11 2L14 5H21M14 5V22.5" fill="#fff" />
    </Icon>
  );
}

function AssemblyIcon() {
  return (
    <Icon className="w-[22px] h-6" viewBox="0 0 22 24">
      <path d="M1 1.5H17L21 5.5V22.5H6L1 17Z" fill="#fff" />
      <path d="M1 1.5H11L15 6V16H6L1 12Z" fill={GRAY} />
      <path d="M6 22.5V6H21M1 1.5L6 6M11 1.5L15 6" />
    </Icon>
  );
}

const tabs = ['Body', 'RealParts', 'Suspension', 'Assembly 1'];

function TabBar() {
  const [active, setActive] = useState('Suspension');

  return (
    <div className="h-[35px] bg-[#cfcfcf] flex items-start gap-0.5 shrink-0 text-[16px]">
      <button type="button" aria-label="Insert tab" className="w-[45px] h-full pr-1.5 flex items-center justify-center">
        <Icon className="w-5 h-5" viewBox="0 0 20 20">
          <path d="M1 10H19M10 1V19" stroke="#666" strokeWidth="3" />
        </Icon>
      </button>
      {tabs.map((tab) => (
        <button
          key={tab}
          type="button"
          onClick={() => setActive(tab)}
          className={
            tab === active
              ? 'w-[243px] h-[34px] pl-[15px] flex items-center gap-1 bg-white border-b-3 border-[#1651b0] rounded-b-md text-[#333]'
              : 'w-[243px] h-8 pl-[15px] flex items-center gap-1 bg-[#e8e8e8] rounded-b-md shadow-sm text-[#666]'
          }
        >
          {tab === 'Assembly 1' ? <AssemblyIcon /> : <PartStudioIcon />}
          {tab}
        </button>
      ))}
    </div>
  );
}

function App() {
  return (
    <div className="h-screen flex flex-col overflow-hidden bg-white text-[#333] font-['Noto_Sans',sans-serif]">
      <Header />
      <div className="flex-1 min-h-0 flex">
        <LeftRail />
        <div className="flex-1 min-w-0 flex flex-col">
          <Toolbar />
          <div className="flex-1 min-h-0 flex">
            <FeaturePanel />
            <Viewport />
          </div>
          <TabBar />
        </div>
      </div>
    </div>
  );
}

export default App;
